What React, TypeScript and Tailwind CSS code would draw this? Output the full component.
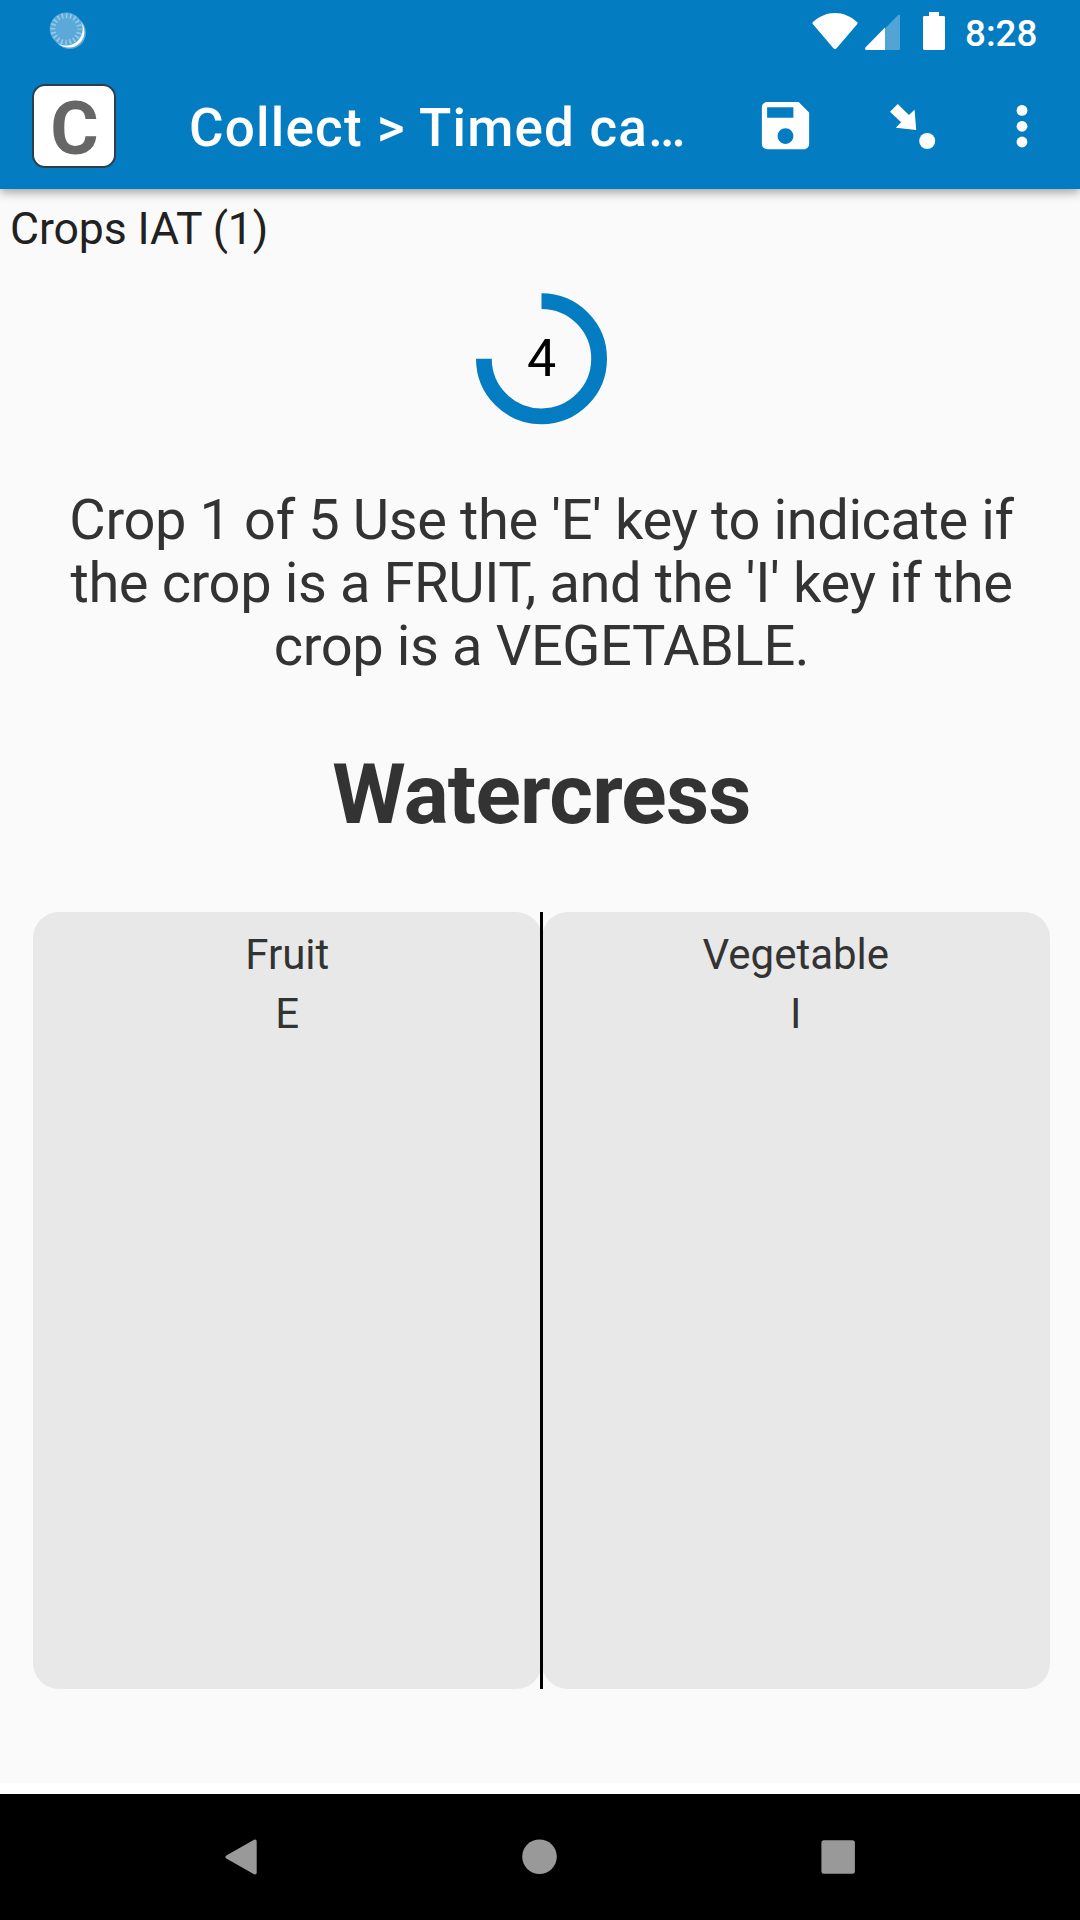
import type { ReactNode } from 'react';

function SyncIcon() {
  return (
    <svg width="40" height="40" viewBox="0 0 40 40">
      <circle cx="21.6" cy="21.6" r="16.4" fill="#5aa9d8" />
      <circle cx="20.8" cy="20.9" r="15.6" fill="#ffffff" />
      <circle cx="18.2" cy="18" r="16.5" fill="#5aa9d8" />
      <circle cx="18.2" cy="18" r="13.3" fill="none" stroke="#9accea" strokeWidth="5" strokeDasharray="1.5 2.678" strokeDashoffset="0.75" />
    </svg>
  );
}

function WifiIcon() {
  return (
    <svg width="46" height="38" viewBox="0 0 46 38">
      <path d="M0.7 9.3C7 3.3 15 0 23 0s16 3.3 22.3 9.3c.4.6.3 1.2 0 1.6L24.6 35.3c-1 1-2.2 1-3.2 0L.8 10.9c-.4-.4-.5-1-.1-1.6z" fill="#fff" />
    </svg>
  );
}

function SignalIcon() {
  return (
    <svg width="35" height="36" viewBox="0 0 35 36">
      <path d="M20 14.5L32.9 1.2C33.9.2 35 .6 35 1.8V34.4a1.6 1.6 0 0 1-1.6 1.6H20z" fill="#52a4d5" />
      <path d="M20 13.5V36H1.4C0 36-.4 34.6.4 33.6z" fill="#fff" />
    </svg>
  );
}

function BatteryIcon() {
  return (
    <svg width="22" height="38" viewBox="0 0 22 38">
      <path d="M6 0h10v4h4.6A1.4 1.4 0 0 1 22 5.4V36.6A1.4 1.4 0 0 1 20.6 38H1.4A1.4 1.4 0 0 1 0 36.6V5.4A1.4 1.4 0 0 1 1.4 4H6z" fill="#fff" />
    </svg>
  );
}

function StatusBar() {
  return (
    <div className="flex h-[63px] items-start pr-11 pl-12">
      <div className="pt-[11px]">
        <SyncIcon />
      </div>
      <div className="ml-auto pt-[13px]">
        <WifiIcon />
      </div>
      <div className="ml-[7px] pt-3.5">
        <SignalIcon />
      </div>
      <div className="ml-[23px] pt-3">
        <BatteryIcon />
      </div>
      <span className="ml-5 w-[71px] pt-[14px] text-[36.75px] leading-10 font-medium whitespace-nowrap">8:28</span>
    </div>
  );
}

function SaveIcon() {
  return (
    <svg width="63" height="63" viewBox="0 0 24 24" fill="#fff">
      <path d="M17 3H5c-1.11 0-2 .9-2 2v14c0 1.1.89 2 2 2h14c1.1 0 2-.9 2-2V7l-4-4zm-5 16c-1.66 0-3-1.34-3-3s1.34-3 3-3 3 1.34 3 3-1.34 3-3 3zm3-10H5V5h10v4z" />
    </svg>
  );
}

function GoToIcon() {
  return (
    <svg width="48" height="48" viewBox="0 0 48 48" fill="#fff">
      <path d="M7.8 2L18.9 13 24.6 7.7 26.2 28 5.8 25.7 11.1 20.3 0 9.7z" />
      <circle cx="37.2" cy="39" r="8" />
    </svg>
  );
}

function MoreIcon() {
  return (
    <svg width="12" height="44" viewBox="0 0 12 44" fill="#fff">
      <circle cx="6" cy="6.4" r="5.4" />
      <circle cx="6" cy="22.3" r="5.4" />
      <circle cx="6" cy="38" r="5.4" />
    </svg>
  );
}

function AppBar() {
  return (
    <div className="flex h-[126px] items-center">
      <div className="ml-8 flex size-21 items-center justify-center rounded-[13px] border-[2.5px] border-[#2c3e4c] bg-white pt-[5px] pl-px text-[74px] leading-none font-bold text-[#666]">
        C
      </div>
      <h1 className="ml-[73px] w-[565px] pt-1 text-[53px] leading-[62px] font-medium tracking-[1.19px] whitespace-nowrap">
        Collect &gt; Timed ca…
      </h1>
      <div className="pb-[1px]">
        <SaveIcon />
      </div>
      <div className="ml-[73px]">
        <GoToIcon />
      </div>
      <div className="ml-[78px]">
        <MoreIcon />
      </div>
    </div>
  );
}

function Countdown({ seconds }: { seconds: number }) {
  return (
    <div className="grid size-[134px] place-items-center *:col-start-1 *:row-start-1">
      <svg width="134" height="134" viewBox="0 0 134 134">
        <path d="M66.5 9.1A57.6 57.6 0 1 1 8.9 66.7" fill="none" stroke="#037cc2" strokeWidth="15.8" />
      </svg>
      <span className="text-[52px] leading-[60px] text-black">{seconds}</span>
    </div>
  );
}

function Choice({ label, hotkey }: { label: string; hotkey: string }) {
  return (
    <button className="flex h-full flex-1 flex-col items-center rounded-[26px] bg-[#e8e8e8] pt-[13px] text-[42px] leading-[59px]">
      <span>{label}</span>
      <span>{hotkey}</span>
    </button>
  );
}

function NavButton({ children }: { children: ReactNode }) {
  return (
    <svg width="36" height="36" viewBox="0 0 36 36" fill="#999">
      {children}
    </svg>
  );
}

export default function App() {
  return (
    <div className="flex h-[1920px] w-[1080px] flex-col overflow-hidden bg-white font-[Roboto,sans-serif]">
      <header className="z-10 h-[189px] shrink-0 bg-[#037cc2] text-white shadow-[0_3px_10px_rgba(0,0,0,0.38)]">
        <StatusBar />
        <AppBar />
      </header>

      <main className="flex flex-1 flex-col bg-[#fafafa] pt-3.5 text-[#333]">
        <p className="pl-2.5 text-[44.6px] leading-[52px] tracking-[-0.12px] text-[#212121]">Crops IAT (1)</p>
        <section className="flex flex-col items-center pr-[30px] pl-[33px]">
          <div className="mt-[37px]">
            <Countdown seconds={4} />
          </div>
          <p className="mt-[63px] text-center text-[56px] leading-[63px] tracking-[-0.39px] whitespace-nowrap">
            Crop 1 of 5 Use the 'E' key to indicate if
            <br />
            the crop is a FRUIT, and the 'I' key if the
            <br />
            crop is a VEGETABLE.
          </p>
          <h2 className="mt-[68px] text-[84px] leading-[98px] font-bold tracking-[-0.8px]">Watercress</h2>
          <div className="relative mt-[68px] flex h-[777px] w-full">
            <Choice label="Fruit" hotkey="E" />
            <Choice label="Vegetable" hotkey="I" />
            <div className="absolute top-0 left-[507px] h-full w-[3px] bg-black" />
          </div>
        </section>
      </main>

      <nav className="mt-[11px] flex h-[126px] shrink-0 items-center bg-black pl-[223px]">
        <NavButton>
          <path d="M3.3 16.5L30.6.9c1.7-1 3.1-.2 3.1 1.5V33.6c0 1.700-1.4 2.500-3.100 1.500L3.300 19.500c-1.300-.8-1.300-2.200 0-3z" />
        </NavButton>
        <div className="ml-[262px]">
          <NavButton>
            <circle cx="18.5" cy="17.7" r="17.3" />
          </NavButton>
        </div>
        <div className="ml-[263px]">
          <NavButton>
            <rect x="1.4" y="1.3" width="33.5" height="33.5" rx="2.5" />
          </NavButton>
        </div>
      </nav>
    </div>
  );
}
